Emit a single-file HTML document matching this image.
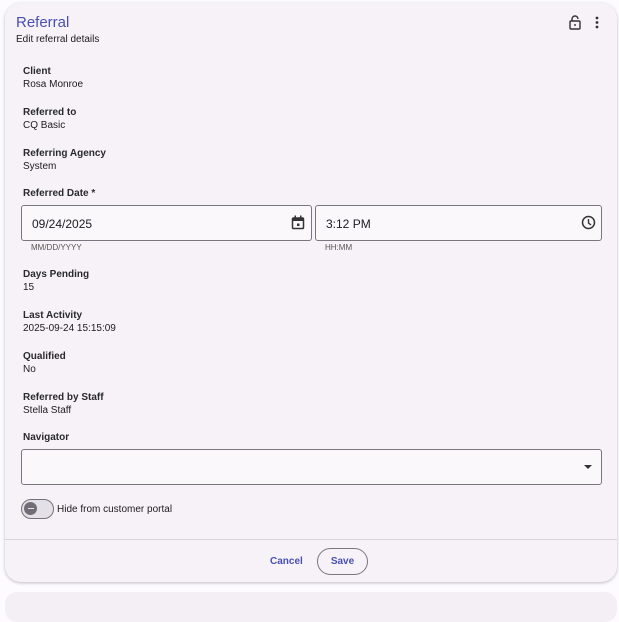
<!DOCTYPE html>
<html><head><style>
*{box-sizing:border-box;margin:0;padding:0}
body{width:619px;height:601px;background:#fdfbff;font-family:"Liberation Sans",sans-serif;color:#1c1b1f;position:relative;overflow:hidden}
.card{position:absolute;left:5px;top:3px;width:612px;height:579px;background:#f6f2f7;border-radius:16px;box-shadow:0 1px 3px rgba(0,0,0,.25)}
.card2{position:absolute;left:5px;top:592px;width:612px;height:30px;background:#f3eff4;border-radius:12px}
.title{position:absolute;left:11px;top:11px;font-size:15px;color:#4a4fb2}
.sub{position:absolute;left:11px;top:31px;font-size:10px}
.lbl{position:absolute;left:18px;font-size:10px;font-weight:bold;color:#2a2a2e}
.val{position:absolute;left:18px;font-size:10px}
.field{position:absolute;height:36px;border:1px solid #7a7680;border-radius:3px;background:#fbf8fc;font-size:12px;padding:11px 0 0 10px}
.hint{position:absolute;font-size:8px;color:#555}
.div{position:absolute;left:0;right:0;top:536px;border-top:1px solid #d8d4da}
</style></head><body>
<div class="card">
<div class="title">Referral</div>
<div class="sub">Edit referral details</div>
<svg style="position:absolute;left:564px;top:12px" width="12" height="15" viewBox="0 0 12 15"><rect x="1" y="6" width="10" height="8" rx="1" fill="none" stroke="#333" stroke-width="1.4"/><path d="M3 6V4a3 3 0 0 1 6 0" fill="none" stroke="#333" stroke-width="1.4"/><rect x="5.3" y="9" width="1.4" height="2" fill="#333"/></svg>
<svg style="position:absolute;left:590px;top:13px" width="4" height="13"><circle cx="2" cy="2" r="1.4" fill="#333"/><circle cx="2" cy="6.5" r="1.4" fill="#333"/><circle cx="2" cy="11" r="1.4" fill="#333"/></svg>
<div class="lbl" style="top:63px">Client</div><div class="val" style="top:76px">Rosa Monroe</div>
<div class="lbl" style="top:104px">Referred to</div><div class="val" style="top:117px">CQ Basic</div>
<div class="lbl" style="top:145px">Referring Agency</div><div class="val" style="top:158px">System</div>
<div class="lbl" style="top:185px">Referred Date *</div>
<div class="field" style="left:16px;top:202px;width:291px">09/24/2025
<svg style="position:absolute;right:6px;top:9px" width="14" height="15" viewBox="0 0 14 15"><rect x="1.5" y="3" width="11" height="10.5" rx="1" fill="none" stroke="#333" stroke-width="1.5"/><rect x="1.5" y="3" width="11" height="3" fill="#333"/><rect x="3.5" y="0.5" width="1.5" height="3" fill="#333"/><rect x="9" y="0.5" width="1.5" height="3" fill="#333"/><rect x="6" y="8.5" width="2.5" height="2.5" fill="#333"/></svg></div>
<div class="field" style="left:310px;top:202px;width:287px">3:12 PM
<svg style="position:absolute;right:5px;top:9px" width="15" height="15" viewBox="0 0 15 15"><circle cx="7.5" cy="7.5" r="6" fill="none" stroke="#333" stroke-width="1.5"/><path d="M7.5 4v4l2.5 2" fill="none" stroke="#333" stroke-width="1.4"/></svg></div>
<div class="hint" style="left:26px;top:240px">MM/DD/YYYY</div>
<div class="hint" style="left:320px;top:240px">HH:MM</div>
<div class="lbl" style="top:266px">Days Pending</div><div class="val" style="top:279px">15</div>
<div class="lbl" style="top:307px">Last Activity</div><div class="val" style="top:320px">2025-09-24 15:15:09</div>
<div class="lbl" style="top:348px">Qualified</div><div class="val" style="top:361px">No</div>
<div class="lbl" style="top:389px">Referred by Staff</div><div class="val" style="top:402px">Stella Staff</div>
<div class="lbl" style="top:429px">Navigator</div>
<div class="field" style="left:16px;top:446px;width:581px">
<svg style="position:absolute;right:9px;top:15px" width="8" height="5"><path d="M0 0h8L4 4z" fill="#333"/></svg></div>
<div style="position:absolute;left:16px;top:496px;width:33px;height:20px;border:1.5px solid #74717a;border-radius:10px;background:#e4e0e7"><div style="position:absolute;left:2px;top:2px;width:13px;height:13px;border-radius:50%;background:#706d76"><div style="position:absolute;left:3.5px;top:6px;width:6px;height:1.2px;background:#e4e0e7"></div></div></div>
<div class="val" style="left:52px;top:501px">Hide from customer portal</div>
<div class="div"></div>
<div style="position:absolute;left:265px;top:553px;font-size:10px;font-weight:bold;color:#4a4fb2">Cancel</div>
<div style="position:absolute;left:312px;top:545px;width:51px;height:27px;border:1px solid #7a7680;border-radius:14px;font-size:10px;font-weight:bold;color:#4a4fb2;text-align:center;line-height:25px">Save</div>
</div>
<div class="card2"></div>
</body></html>
